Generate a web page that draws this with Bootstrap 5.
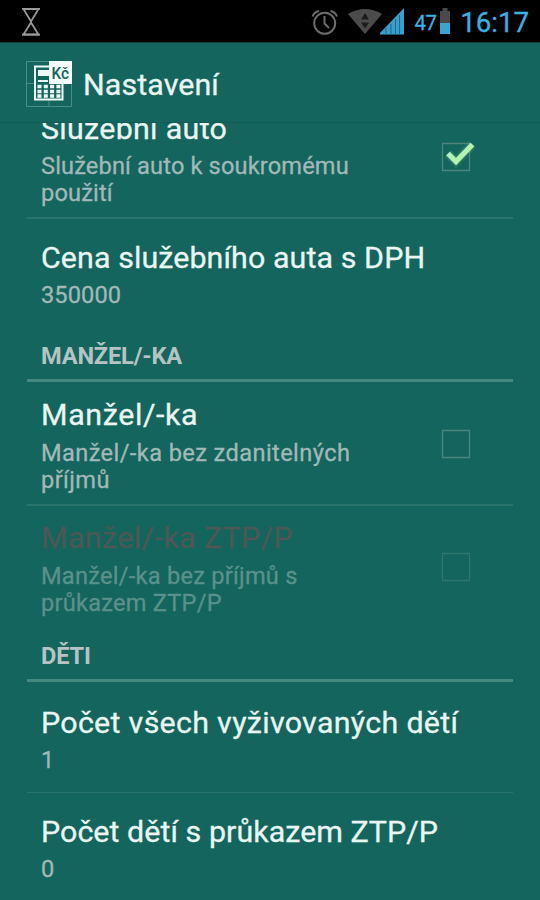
<!DOCTYPE html>
<html lang="cs">
<head>
<meta charset="utf-8">
<meta name="viewport" content="width=device-width, initial-scale=1">
<title>Nastavení</title>
<link href="https://cdn.jsdelivr.net/npm/bootstrap@5.3.0/dist/css/bootstrap.min.css" rel="stylesheet">
<style>
body{background:#14655d;font-family:Roboto,sans-serif;color:#eaf5f3}
.screen{width:540px;height:900px;background:#14655d}
.status-bar{height:42px;background:#000;padding:0 11px 0 20px;color:#39b1e2}
.status-bar svg,.app-bar svg,.pref svg{display:block;flex:none}
.battery{margin-left:3.5px}
.clock{font-size:27.6px;line-height:42px;margin-left:10px;padding-top:3px;-webkit-text-stroke:.3px}
.pct{font-size:20.4px;line-height:42px;margin-left:10px;padding-top:3px;letter-spacing:-.3px;-webkit-text-stroke:.3px}
.app-bar{height:81px;padding:2px 25px 0;border-top:1px solid #0b453f;border-bottom:1px solid #125c55}
.app-title{font-size:30.4px;line-height:36px;margin-left:10px;padding-top:2px;letter-spacing:.1px;-webkit-text-stroke:.3px}
.prefs{padding:0 27px}
.pref{padding:22px 36px 0 14px;border-bottom:2px solid #2a746c}
.pref-title{font-size:30.4px;line-height:36px;white-space:nowrap;-webkit-text-stroke:.3px}
.pref-sub{font-size:23.6px;line-height:27px;margin-top:6px;color:#a1b9b8;white-space:nowrap;-webkit-text-stroke:.3px}
.pref-off .pref-title{color:#4b5855}
.pref-off .pref-sub{color:#5b918c}
.pref-off svg{opacity:.5}
.section{font-size:23.6px;line-height:27px;font-weight:700;color:#b5c3c4;padding:1px 0 0 14px;border-bottom:3px solid #448880;letter-spacing:-.17px}
.r1{height:97px;margin-top:-1px;padding-top:0}
.r1 .pref-title{margin-top:-11px;letter-spacing:.3px}
.r1 .pref-sub{letter-spacing:.15px}
.r1 svg{margin-top:15px}
.r2{height:123px;padding-top:21px;border:0;letter-spacing:.09px}
.s1{height:40px}
.r3{height:124px;padding-top:15px}
.r3 .pref-title{letter-spacing:.62px}
.r3 .pref-sub,.r4 .pref-sub{margin-top:7px}
.r3 .pref-sub{letter-spacing:.41px}
.r3 svg{margin-top:27px}
.r4{height:136px;padding-top:14px;border:0}
.r4 .pref-title{letter-spacing:.38px}
.r4 .pref-sub{letter-spacing:.25px}
.r4 svg{margin-top:27px}
.s2{height:40px}
.r5{height:111px;padding-top:23px;border-bottom-width:1px;letter-spacing:.3px}
.r6{height:107px;padding-top:21px;border:0;letter-spacing:.05px}
</style>
</head>
<body>
<main class="screen overflow-hidden d-flex flex-column">
  <div class="status-bar d-flex align-items-center flex-shrink-0">
    <svg width="22" height="42" viewBox="20 0 22 42" fill="none" stroke="#999" stroke-width="1.8"><path d="M23.500 9H38.500L31 21.500ZM23.500 34.500H38.500L31 22.500Z"/><path d="M22 8.800H40M22 34.700H40"/></svg>
    <svg class="ms-auto" width="94" height="42" viewBox="310 0 94 42">
      <g fill="none" stroke="#6c6c6c" stroke-width="2"><circle cx="324.700" cy="23.300" r="10.500"/><path d="M324.500 16V23.500L329 28M312.500 16.500Q314 12 319 11M337 16.500Q335.500 12 330.500 11"/></g>
      <path d="M348 14Q365 4 382 14L365 34Z" fill="#4b4b4b"/><path d="M361 19.500L365 13L369 19.500ZM361 22.500L365 28.500L369 22.500Z" fill="#1c1c1c"/>
      <path d="M380 34.500V33L404 8V34.500Z" fill="#369fcb"/><path d="M386 28V35M391 24V35M395.500 19V35M399.500 15V35" stroke="#1f6a8a"/>
    </svg>
    <span class="pct">47</span>
    <svg class="battery" width="10" height="42" viewBox="0 0 10 42"><path d="M0 11H2.500V8H7.500V11H10V23H0Z" fill="#4a4a4a"/><path d="M0 23H10V34H0Z" fill="#39a5d2"/></svg>
    <span class="clock">16:17</span>
  </div>
  <header class="app-bar d-flex align-items-center flex-shrink-0">
    <svg width="48" height="48" viewBox="25 60 48 48">
      <path d="M26.500 61.500H71.500V106.500H26.500ZM26.500 83.500H34M63 83.500H71.500M49 100V106.500" fill="none" stroke="#4a8d86"/>
      <path d="M35 66.500H62.500V99.500H35Z" fill="none" stroke="#f0fbf9" stroke-width="2"/>
      <path d="M38 70H50V76H38Z" fill="#f0fbf9"/>
      <path d="M38 81H60" stroke="#f0fbf9" stroke-width="2" stroke-dasharray="10 2"/>
      <path d="M37.500 86.500H60.500M37.500 91.500H60.500M37.500 96H60.500" stroke="#f0fbf9" stroke-width="3.500" stroke-dasharray="4 2.300"/>
      <path d="M49 61H72V84H49Z" fill="#f5fffd"/>
      <text x="51.500" y="78.500" font-family="Roboto" font-size="16" font-weight="500" fill="#14655d" textLength="17.500" lengthAdjust="spacingAndGlyphs">Kč</text>
    </svg>
    <div class="app-title">Nastavení</div>
  </header>
  <div class="prefs flex-grow-1 overflow-hidden">
    <div class="pref r1 d-flex justify-content-between overflow-hidden">
      <div><div class="pref-title">Služební auto</div><div class="pref-sub">Služební auto k soukromému<br>použití</div></div>
      <svg width="36" height="40" viewBox="0 0 36 40">
        <path d="M1.500 6.500H28.500V33.500H1.500Z" fill="none" stroke="#4b857e" stroke-width="1.300"/>
        <g fill="none" stroke="#b5f3b0"><path d="M7 16.500L15 24.500L31.500 7.500" stroke-width="10" opacity=".07"/><path d="M7 16.500L15 24.500L31.500 7.500" stroke-width="7.500" opacity=".12"/><path d="M7 16.500L15 24.500L31.500 7.500" stroke-width="5.200"/></g>
      </svg>
    </div>
    <div class="pref r2"><div class="pref-title">Cena služebního auta s DPH</div><div class="pref-sub">350000</div></div>
    <div class="section s1">MANŽEL/-KA</div>
    <div class="pref r3 d-flex justify-content-between">
      <div><div class="pref-title">Manžel/-ka</div><div class="pref-sub">Manžel/-ka bez zdanitelných<br>příjmů</div></div>
      <svg width="36" height="40" viewBox="0 0 36 40"><path d="M1.500 6.500H28.500V33.500H1.500Z" fill="none" stroke="#4b857e" stroke-width="1.300"/></svg>
    </div>
    <div class="pref pref-off r4 d-flex justify-content-between">
      <div><div class="pref-title">Manžel/-ka ZTP/P</div><div class="pref-sub">Manžel/-ka bez příjmů s<br>průkazem ZTP/P</div></div>
      <svg width="36" height="40" viewBox="0 0 36 40"><path d="M1.500 6.500H28.500V33.500H1.500Z" fill="none" stroke="#4b857e" stroke-width="1.300"/></svg>
    </div>
    <div class="section s2">DĚTI</div>
    <div class="pref r5"><div class="pref-title">Počet všech vyživovaných dětí</div><div class="pref-sub">1</div></div>
    <div class="pref r6"><div class="pref-title">Počet dětí s průkazem ZTP/P</div><div class="pref-sub">0</div></div>
  </div>
</main>
<script src="https://cdn.jsdelivr.net/npm/bootstrap@5.3.0/dist/js/bootstrap.bundle.min.js"></script>
</body>
</html>
